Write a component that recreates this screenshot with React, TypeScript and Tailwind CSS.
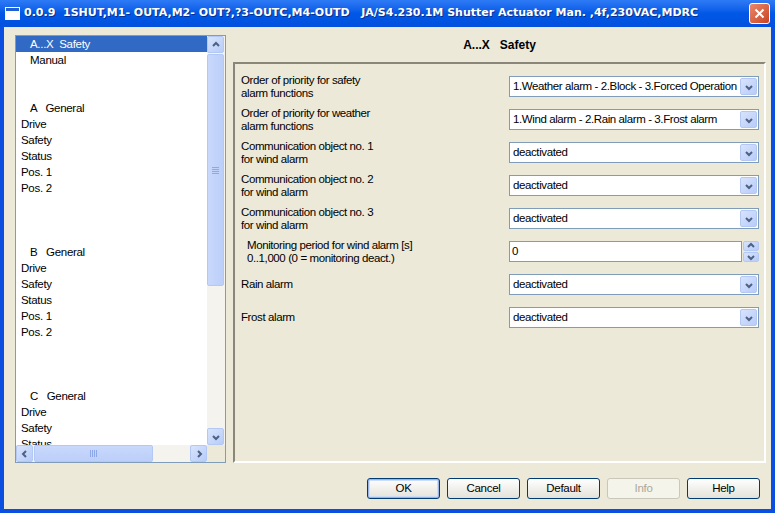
import React from "react";

const FONT = { fontFamily: '"Liberation Sans", Arial, sans-serif' };

type TreeItem = { text: string; indent: boolean; selected?: boolean };

const treeItems: TreeItem[] = [
  { text: "A...X  Safety", indent: true, selected: true },
  { text: "Manual", indent: true },
  { text: "", indent: false },
  { text: "", indent: false },
  { text: "A   General", indent: true },
  { text: "Drive", indent: false },
  { text: "Safety", indent: false },
  { text: "Status", indent: false },
  { text: "Pos. 1", indent: false },
  { text: "Pos. 2", indent: false },
  { text: "", indent: false },
  { text: "", indent: false },
  { text: "", indent: false },
  { text: "B   General", indent: true },
  { text: "Drive", indent: false },
  { text: "Safety", indent: false },
  { text: "Status", indent: false },
  { text: "Pos. 1", indent: false },
  { text: "Pos. 2", indent: false },
  { text: "", indent: false },
  { text: "", indent: false },
  { text: "", indent: false },
  { text: "C   General", indent: true },
  { text: "Drive", indent: false },
  { text: "Safety", indent: false },
  { text: "Status", indent: false },
];

const Chevron = ({ dir }: { dir: "up" | "down" | "left" | "right" }) => {
  const pts = {
    up: "2,6 5,3 8,6",
    down: "2,4 5,7 8,4",
    left: "6,2 3,5 6,8",
    right: "4,2 7,5 4,8",
  }[dir];
  return (
    <svg width="10" height="10" viewBox="0 0 10 10">
      <polyline points={pts} fill="none" stroke="#4D6185" strokeWidth="2" />
    </svg>
  );
};

const ScrollBtn = ({ dir, className = "" }: { dir: "up" | "down" | "left" | "right"; className?: string }) => (
  <div
    className={`flex items-center justify-center rounded-[2px] border border-[#B4C8F6] bg-gradient-to-br from-[#D8E4FD] to-[#B8CCF8] ${className}`}
  >
    <Chevron dir={dir} />
  </div>
);

const Grip = ({ vertical }: { vertical: boolean }) => (
  <div className={`flex ${vertical ? "flex-col gap-[1px]" : "flex-row gap-[1px]"}`}>
    {[0, 1, 2, 3].map((i) => (
      <div key={i} className={vertical ? "h-[1px] w-[7px] bg-[#8CA8E8]" : "h-[7px] w-[1px] bg-[#8CA8E8]"} />
    ))}
  </div>
);

const TreePanel = () => (
  <div className="flex h-[428px] w-[211px] flex-col border border-[#7F9DB9] bg-white">
    <div className="flex h-[409px]">
      <div className="w-[191px] overflow-hidden text-[11.5px] tracking-[-0.3px] text-black">
        {treeItems.map((it, i) => (
          <div
            key={i}
            className={`h-[16px] whitespace-pre leading-[16px] ${it.indent ? "pl-[14px]" : "pl-[5px]"} ${
              it.selected ? "bg-[#316AC5] text-white" : ""
            }`}
          >
            {it.text}
          </div>
        ))}
      </div>
      <div className="flex w-[18px] flex-col bg-[#F4F3EE]">
        <ScrollBtn dir="up" className="h-[17px] w-[17px]" />
        <div className="mt-[1px] flex h-[232px] w-[17px] items-center justify-center rounded-[2px] border border-[#B4C8F6] bg-gradient-to-r from-[#C9D8FC] to-[#BCCFF9]">
          <Grip vertical />
        </div>
        <div className="flex-1" />
        <ScrollBtn dir="down" className="h-[17px] w-[17px]" />
      </div>
    </div>
    <div className="flex h-[17px] bg-[#F4F3EE]">
      <ScrollBtn dir="left" className="h-[17px] w-[17px]" />
      <div className="ml-[1px] flex h-[17px] w-[119px] items-center justify-center rounded-[2px] border border-[#B4C8F6] bg-gradient-to-b from-[#C9D8FC] to-[#BCCFF9]">
        <Grip vertical={false} />
      </div>
      <div className="flex-1" />
      <ScrollBtn dir="right" className="h-[17px] w-[17px]" />
      <div className="w-[18px] bg-[#ECE9D8]" />
    </div>
  </div>
);

const SelectBox = ({ value }: { value: string }) => (
  <div className="flex h-[21px] w-[250px] items-center border border-[#7F9DB9] bg-white">
    <div className="flex-1 overflow-hidden whitespace-nowrap pl-[3px] text-[11.5px] tracking-[-0.4px] text-black">
      {value}
    </div>
    <ScrollBtn dir="down" className="mr-[1px] h-[17px] w-[17px]" />
  </div>
);

const SpinBox = ({ value }: { value: string }) => (
  <div className="flex h-[21px] w-[250px] items-center">
    <div className="flex h-[21px] flex-1 items-center border border-[#7F9DB9] bg-white pl-[2px] text-[11.5px]">
      {value}
    </div>
    <div className="ml-[1px] flex h-[21px] w-[16px] flex-col gap-[1px]">
      <ScrollBtn dir="up" className="h-[10px] w-[16px]" />
      <ScrollBtn dir="down" className="h-[10px] w-[16px]" />
    </div>
  </div>
);

type Row = { label: string[]; control: React.ReactNode; indent?: boolean };

const rows: Row[] = [
  { label: ["Order of priority for safety", "alarm functions"], control: <SelectBox value="1.Weather alarm - 2.Block - 3.Forced Operation" /> },
  { label: ["Order of priority for weather", "alarm functions"], control: <SelectBox value="1.Wind alarm - 2.Rain alarm - 3.Frost alarm" /> },
  { label: ["Communication object no. 1", "for wind alarm"], control: <SelectBox value="deactivated" /> },
  { label: ["Communication object no. 2", "for wind alarm"], control: <SelectBox value="deactivated" /> },
  { label: ["Communication object no. 3", "for wind alarm"], control: <SelectBox value="deactivated" /> },
  {
    label: ["Monitoring period for wind alarm [s]", "0..1,000 (0 = monitoring deact.)"],
    control: <SpinBox value="0" />,
    indent: true,
  },
  { label: ["Rain alarm"], control: <SelectBox value="deactivated" /> },
  { label: ["Frost alarm"], control: <SelectBox value="deactivated" /> },
];

const XPButton = ({ label, primary, disabled }: { label: string; primary?: boolean; disabled?: boolean }) => (
  <div
    className={`flex h-[21px] w-[73px] items-center justify-center rounded-[3px] border text-[11.5px] tracking-[-0.3px] ${
      disabled
        ? "border-[#C9C7BA] bg-[#F5F4EA] text-[#ACA899]"
        : "border-[#003C74] bg-gradient-to-b from-[#FFFFFF] to-[#E3E2DA] text-black"
    } ${primary ? "shadow-[inset_0_0_0_1px_#99B5E8,inset_0_0_0_2px_#CEDDF7]" : ""}`}
  >
    {label}
  </div>
);

export default function App() {
  return (
    <div className="flex h-[513px] w-[775px] flex-col overflow-hidden bg-[#0A4FDF]">
      {/* title bar */}
      <div className="flex h-[27px] items-center bg-gradient-to-b from-[#2E7BF6] via-[#0058E6] to-[#0350DE] pl-[5px] pr-[5px]">
        <div className="flex h-[13px] w-[15px] flex-col border border-white bg-white">
          <div className="h-[3px] bg-[#1F5FD6]" />
        </div>
        <div
          className="ml-[4px] flex-1 overflow-hidden whitespace-pre text-[11px] font-bold text-white [text-shadow:1px_1px_0_#0A2F8C]"
          style={{ fontFamily: '"DejaVu Sans", Verdana, sans-serif' }}
        >
          0.0.9  1SHUT,M1- OUTA,M2- OUT?,?3-OUTC,M4-OUTD   JA/S4.230.1M Shutter Actuator Man. ,4f,230VAC,MDRC
        </div>
        <div className="flex h-[21px] w-[21px] items-center justify-center rounded-[3px] border border-white bg-gradient-to-br from-[#E9876B] to-[#C9421F]">
          <svg width="11" height="11" viewBox="0 0 11 11">
            <path d="M1.5 1.5 L9.5 9.5 M9.5 1.5 L1.5 9.5" stroke="white" strokeWidth="2" />
          </svg>
        </div>
      </div>

      {/* body */}
      <div className="mx-[4px] mb-[4px] flex flex-1 flex-col bg-[#ECE9D8] pl-[11px] pr-[5px] pt-[8px]" style={FONT}>
        <div className="flex gap-[7px]">
          <TreePanel />
          <div className="flex flex-1 flex-col">
            <div className="flex h-[27px] items-start justify-center whitespace-pre pt-[1px] text-[12px] font-bold text-black">
              A...X   Safety
            </div>
            <div className="h-[401px] border-b-2 border-l-2 border-r-2 border-t-2 border-b-white border-l-[#8A877A] border-r-white border-t-[#8A877A] pl-[6px] pt-[6px]">
              {rows.map((r, i) => (
                <div key={i} className="flex h-[33px] items-center">
                  <div
                    className={`w-[268px] text-[11.5px] leading-[13px] tracking-[-0.4px] text-black ${r.indent ? "pl-[6px]" : ""}`}
                  >
                    {r.label.map((l, j) => (
                      <div key={j} className="whitespace-pre">
                        {l}
                      </div>
                    ))}
                  </div>
                  {r.control}
                </div>
              ))}
            </div>
          </div>
        </div>
        <div className="mt-[15px] flex justify-end gap-[7px] pr-[6px]">
          <XPButton label="OK" primary />
          <XPButton label="Cancel" />
          <XPButton label="Default" />
          <XPButton label="Info" disabled />
          <XPButton label="Help" />
        </div>
      </div>
    </div>
  );
}
